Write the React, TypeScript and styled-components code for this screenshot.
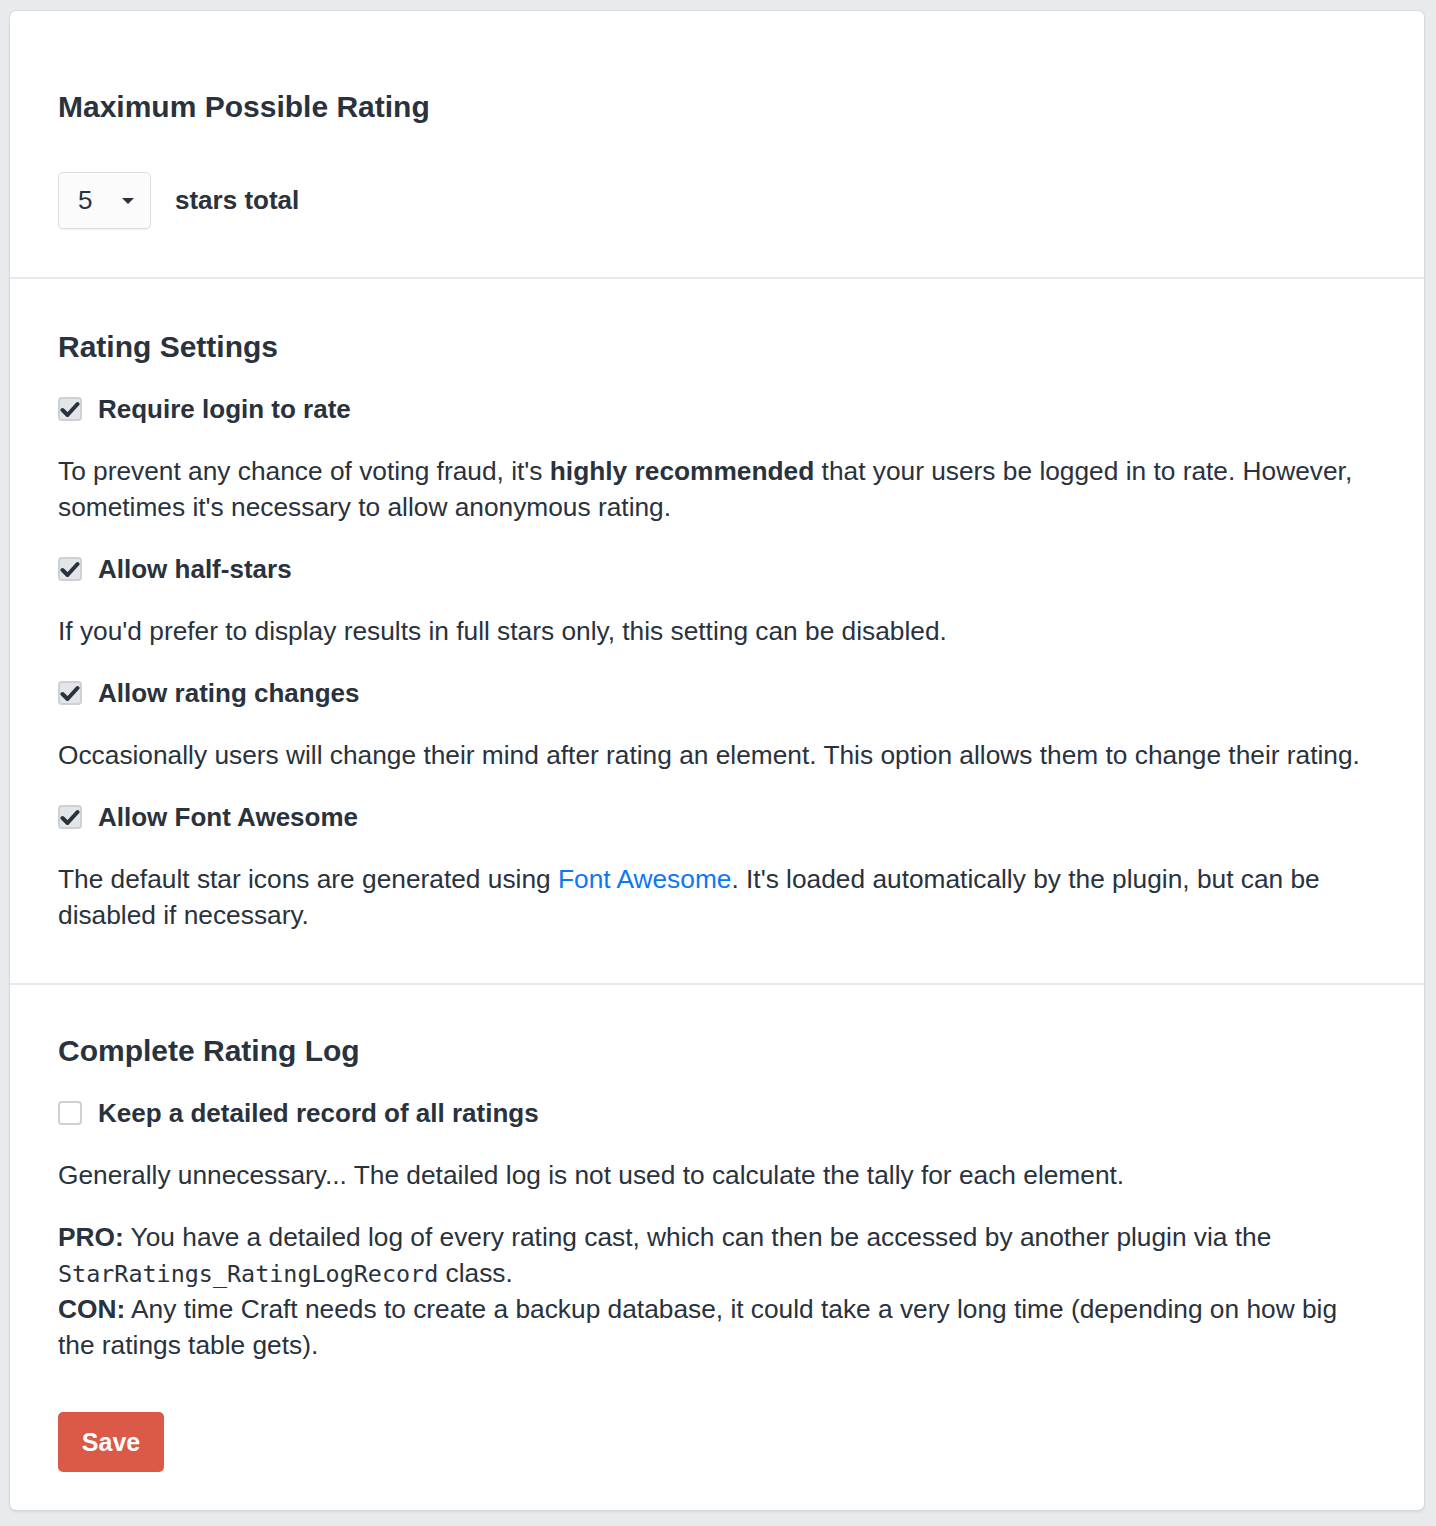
import React from "react";
import styled, { createGlobalStyle } from "styled-components";

const Global = createGlobalStyle`
  html, body { margin: 0; padding: 0; background: #e9eaec; }
  body {
    font-family: "Liberation Sans", Arial, sans-serif;
    color: #29323d;
    -webkit-font-smoothing: antialiased;
  }
`;

const Page = styled.div`
  padding: 11px 12px 16px 10px;
  min-height: 1526px;
  box-sizing: border-box;
`;

const Card = styled.div`
  background: #fff;
  border-radius: 6px;
  box-shadow: 0 0 0 1px rgba(205, 210, 216, 0.6), 0 2px 3px rgba(0, 0, 0, 0.08);
  overflow: hidden;
`;

const Section = styled.section<{ $top: number; $bottom: number }>`
  padding: ${(p) => p.$top}px 48px ${(p) => p.$bottom}px;
  display: flex;
  flex-direction: column;
  gap: 26px;
  & + & {
    border-top: 2px solid #e8e9eb;
  }
`;

const Heading = styled.h2`
  margin: 0;
  font-size: 30px;
  line-height: 36px;
  font-weight: 700;
`;

const SelectRow = styled.div`
  display: flex;
  align-items: center;
  gap: 24px;
  margin-top: 21px;
`;

const SelectBox = styled.div`
  width: 93px;
  height: 57px;
  box-sizing: border-box;
  border: 1px solid #dcdfe3;
  border-radius: 5px;
  background: #fbfbfb;
  box-shadow: 0 1px 2px rgba(0, 0, 0, 0.06);
  display: flex;
  align-items: center;
  justify-content: space-between;
  padding: 0 16px 0 19px;
  font-size: 26px;
`;

const Caret = styled.span`
  width: 0;
  height: 0;
  border-left: 6px solid transparent;
  border-right: 6px solid transparent;
  border-top: 6px solid #29323d;
`;

const InlineLabel = styled.span`
  font-size: 26px;
  font-weight: 700;
`;

const CheckRow = styled.label`
  display: flex;
  align-items: center;
  gap: 16px;
  font-size: 26px;
  line-height: 36px;
  font-weight: 700;
`;

const Box = styled.span<{ $checked: boolean }>`
  width: 24px;
  height: 24px;
  box-sizing: border-box;
  border: 2px solid #cdd0d4;
  border-radius: 4px;
  background: ${(p) => (p.$checked ? "#e3e5e8" : "#ffffff")};
  display: flex;
  align-items: center;
  justify-content: center;
  flex-shrink: 0;
`;

const Text = styled.p`
  margin: 0;
  font-size: 26.3px;
  line-height: 36px;
`;

const Link = styled.a`
  color: #0d78f2;
  text-decoration: none;
`;

const Code = styled.code`
  font-family: "DejaVu Sans Mono", "Liberation Mono", monospace;
  font-size: 23.4px;
  line-height: 1;
`;

const SaveButton = styled.button`
  align-self: flex-start;
  margin-top: 23px;
  width: 106px;
  height: 60px;
  border: none;
  border-radius: 5px;
  background: #da5a47;
  color: #fff;
  font-family: "Liberation Sans", Arial, sans-serif;
  font-size: 25px;
  font-weight: 700;
`;

const Check = () => (
  <svg width="20" height="17" viewBox="0 0 20 17">
    <path d="M2.5 9 L7.5 14 L17.5 3" fill="none" stroke="#29323d" strokeWidth="4" strokeLinecap="round" strokeLinejoin="round" />
  </svg>
);

const Checkbox = ({ checked, label }: { checked: boolean; label: string }) => (
  <CheckRow>
    <Box $checked={checked}>{checked && <Check />}</Box>
    {label}
  </CheckRow>
);

export default function App() {
  return (
    <Page>
      <Global />
      <Card>
        <Section $top={78} $bottom={48}>
          <Heading>Maximum Possible Rating</Heading>
          <SelectRow>
            <SelectBox>
              5<Caret />
            </SelectBox>
            <InlineLabel>stars total</InlineLabel>
          </SelectRow>
        </Section>
        <Section $top={50} $bottom={50}>
          <Heading>Rating Settings</Heading>
          <Checkbox checked label="Require login to rate" />
          <Text>
            To prevent any chance of voting fraud, it's <b>highly recommended</b> that your users be logged in to rate. However,
            sometimes it's necessary to allow anonymous rating.
          </Text>
          <Checkbox checked label="Allow half-stars" />
          <Text>If you'd prefer to display results in full stars only, this setting can be disabled.</Text>
          <Checkbox checked label="Allow rating changes" />
          <Text>
            Occasionally users will change their mind after rating an element. This option allows them to change their rating.
          </Text>
          <Checkbox checked label="Allow Font Awesome" />
          <Text>
            The default star icons are generated using <Link href="#">Font Awesome</Link>. It's loaded automatically by the
            plugin, but can be disabled if necessary.
          </Text>
        </Section>
        <Section $top={48} $bottom={38}>
          <Heading>Complete Rating Log</Heading>
          <Checkbox checked={false} label="Keep a detailed record of all ratings" />
          <Text>Generally unnecessary... The detailed log is not used to calculate the tally for each element.</Text>
          <Text>
            <b>PRO:</b> You have a detailed log of every rating cast, which can then be accessed by another plugin via the{" "}
            <Code>StarRatings_RatingLogRecord</Code> class.
            <br />
            <b>CON:</b> Any time Craft needs to create a backup database, it could take a very long time (depending on how big
            the ratings table gets).
          </Text>
          <SaveButton>Save</SaveButton>
        </Section>
      </Card>
    </Page>
  );
}
